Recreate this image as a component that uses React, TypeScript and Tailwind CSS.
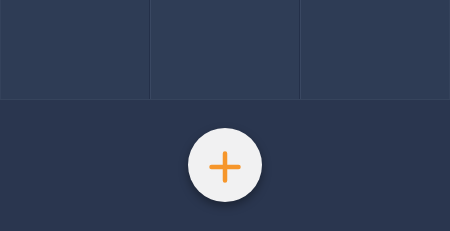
export default function App() {
  return (
    <div className="w-[450px] h-[231px] bg-[#2a364f] flex flex-col overflow-hidden">
      <div className="grid grid-cols-3 h-[100px] border-b border-[#36445c]">
        <div className="bg-[#2e3c55] border-r border-[#243049] border-l border-l-[#34425b]" />
        <div className="bg-[#2f3d56] border-r border-[#243049] border-l border-l-[#3a4862]" />
        <div className="bg-[#2e3c55] border-l border-[#3a4862] border-r border-r-[#34425b]" />
      </div>
      <div className="flex-1 flex justify-center pt-[28px]">
        <button className="w-[74px] h-[74px] rounded-full bg-[#f1f1f2] flex items-center justify-center shadow-[0_4px_10px_rgba(0,0,0,0.35)]">
          <svg width="32" height="32" viewBox="0 0 32 32" fill="none" className="mt-[3px]">
            <path d="M16 2.5v27M2.5 16h27" stroke="#f6962b" strokeWidth="4.5" strokeLinecap="round" />
          </svg>
        </button>
      </div>
    </div>
  );
}
